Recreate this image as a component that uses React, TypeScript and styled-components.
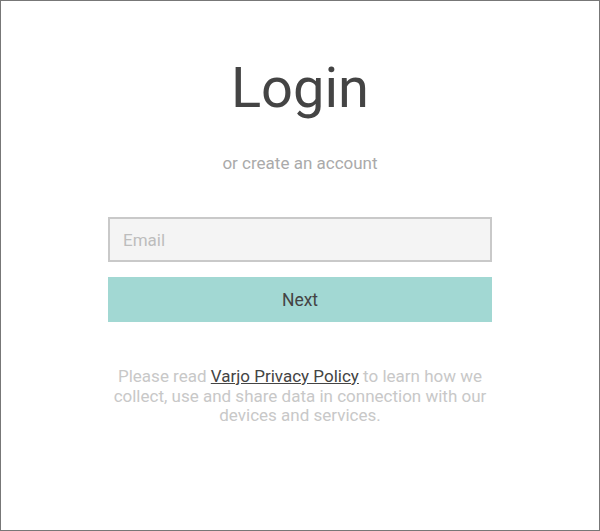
import React from "react";
import styled, { createGlobalStyle } from "styled-components";

const Global = createGlobalStyle`
  html, body { margin: 0; padding: 0; background: #fff; }
  * { box-sizing: border-box; }
  body { font-family: Roboto, "Liberation Sans", sans-serif; }
`;

const Frame = styled.div`
  width: 600px;
  height: 531px;
  border: 1px solid #777;
  background: #fff;
  display: flex;
  flex-direction: column;
  align-items: center;
  padding-top: 58px;
`;

const Column = styled.div`
  width: 384px;
  display: flex;
  flex-direction: column;
  align-items: stretch;
`;

const Title = styled.h1`
  margin: 0;
  font-size: 56px;
  line-height: 58px;
  font-weight: 400;
  color: #444;
  text-align: center;
`;

const Subtitle = styled.a`
  margin-top: 36px;
  font-size: 17px;
  line-height: 20px;
  color: #aaa;
  text-align: center;
  text-decoration: none;
`;

const EmailInput = styled.input`
  margin-top: 44px;
  height: 45px;
  border: 2px solid #c9c9c9;
  background: #f4f4f4;
  padding: 0 13px;
  font-family: Roboto, "Liberation Sans", sans-serif;
  font-size: 17px;
  color: #444;
  outline: none;
  &::placeholder { color: #bdbdbd; }
`;

const NextButton = styled.button`
  margin-top: 15px;
  height: 45px;
  border: none;
  background: #a2d8d3;
  color: #444;
  font-family: Roboto, "Liberation Sans", sans-serif;
  font-size: 17.5px;
  cursor: pointer;
`;

const Notice = styled.p`
  margin: 45px 0 0;
  font-size: 17px;
  line-height: 19.5px;
  color: #c8c8c8;
  text-align: center;
`;

const PolicyLink = styled.a`
  color: #444;
  text-decoration: underline;
`;

export default function App() {
  return (
    <>
      <Global />
      <Frame>
        <Column>
          <Title>Login</Title>
          <Subtitle href="#">or create an account</Subtitle>
          <EmailInput type="email" placeholder="Email" />
          <NextButton>Next</NextButton>
          <Notice>
            Please read <PolicyLink href="#">Varjo Privacy Policy</PolicyLink> to learn how we
            collect, use and share data in connection with our devices and services.
          </Notice>
        </Column>
      </Frame>
    </>
  );
}
